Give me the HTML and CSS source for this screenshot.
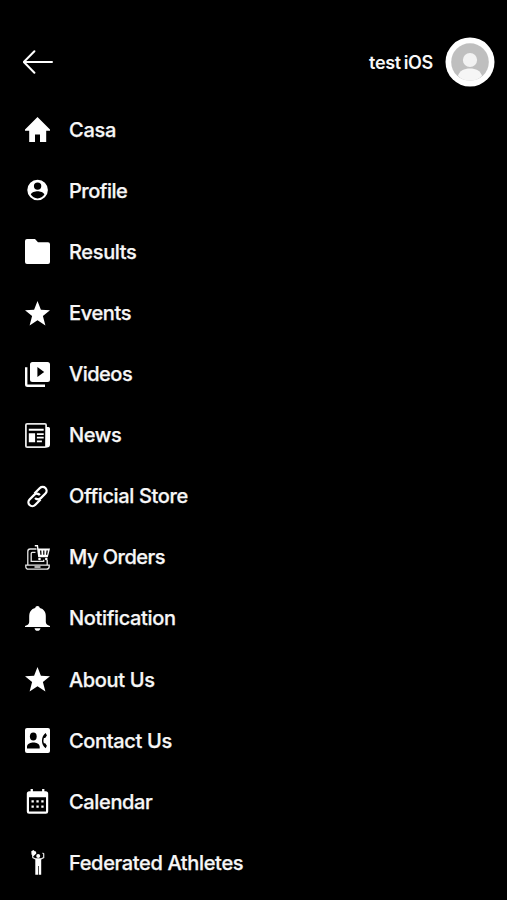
FILE: index.html
```
<!DOCTYPE html>
<html lang="en">
<head>
<meta charset="utf-8">
<title>Menu</title>
<link rel="stylesheet" href="styles.css">
</head>
<body>
<header class="top">
  <svg class="back" viewBox="0 0 30 24"><path d="M11.400 1.200 .8 12l10.600 10.800M1 12h28" /></svg>
  <span class="user">test iOS</span>
  <svg class="avatar" viewBox="0 0 50 50">
    <circle cx="25" cy="25" r="24.500" fill="#fff"/>
    <circle cx="25" cy="25" r="18.800" fill="#bfbfbf"/>
    <circle cx="25" cy="23" r="7.100" fill="#f2f2f2"/>
    <path d="M13 38.800c1.200-5 6.200-7.400 12-7.400s10.800 2.400 12 7.400c-3 3.200-7.200 5-12 5s-9-1.800-12-5z" fill="#f6f6f6"/>
  </svg>
</header>
<nav class="menu">
  <a class="item"><svg class="icon" viewBox="0 0 25 25"><path d="M12.500 0 25 12.500v1.200h-3.800V25H15v-7.500h-5V25H4.200V13.700H0v-1.200z"/></svg><span class="label casa">Casa</span></a>
  <a class="item"><svg class="icon" viewBox="0 0 25 25"><path fill-rule="evenodd" d="M12.600 1.700a10.300 10.300 0 1 0 0 20.600 10.300 10.300 0 0 0 0-20.600zM12.600 4.400a3.700 3.700 0 1 1 0 7.400 3.700 3.700 0 0 1 0-7.400zM12.600 20.400c-3 0-5.300-1.400-6.800-3.800.3-2.300 4.600-3.400 6.800-3.400s6.500 1.100 6.800 3.400c-1.500 2.400-3.800 3.800-6.800 3.800z"/></svg><span class="label tight">Profile</span></a>
  <a class="item"><svg class="icon" viewBox="0 0 25 25"><path d="M2 0h8l3 3.200h10a2 2 0 0 1 2 2V23a2 2 0 0 1-2 2H2a2 2 0 0 1-2-2V2a2 2 0 0 1 2-2z"/></svg><span class="label">Results</span></a>
  <a class="item"><svg class="icon" viewBox="0 0 25 25"><path d="m12.500 0 3.400 8.800 9.100.4-7.100 5.900 2.500 9.400-7.900-5.200-7.900 5.200 2.500-9.400L0 9.200l9.100-.4z"/></svg><span class="label">Events</span></a>
  <a class="item"><svg class="icon" viewBox="0 0 25 25"><path fill-rule="evenodd" d="M7.500 0h15A2.500 2.500 0 0 1 25 2.500v15a2.500 2.500 0 0 1-2.500 2.500h-15A2.500 2.500 0 0 1 5 17.500v-15A2.500 2.500 0 0 1 7.500 0zM12.400 4.900v10.200L19.200 10zM0 5.300h2.400v17.300H20V25H2.500A2.500 2.500 0 0 1 0 22.500z"/></svg><span class="label tight">Videos</span></a>
  <a class="item"><svg class="icon" viewBox="0 0 25 25"><rect x=".9" y=".9" width="20.200" height="23.200" rx="1.200" class="line thick"/><path d="M21 4h2.500A1.500 1.500 0 0 1 25 5.500v16a3 3 0 0 1-3 3h-1.500zM3.800 5.800h14.900v2H3.800zM3.800 10.300h6.300v9H3.800zM11.900 10.200h6.800v1.700h-6.800zM11.900 13.800h6.800v1.700h-6.800zM11.900 17.600h5v1.700h-5z"/></svg><span class="label">News</span></a>
  <a class="item"><svg class="icon" viewBox="0 0 25 25"><g class="line link" transform="rotate(-45 12.500 12.500)"><path d="M12.500 16.800H4.800a3.900 3.900 0 0 1 0-7.800h6.500a3.900 3.900 0 0 1 3.900 4.200"/><path d="M12.500 8.200h7.700a3.900 3.900 0 0 1 0 7.800h-6.500a3.900 3.900 0 0 1-3.900-4.200"/></g></svg><span class="label">Official Store</span></a>
  <a class="item"><svg class="icon" viewBox="0 0 25 25"><path class="line" d="M11.500 4H5.200Q2.800 4 2.800 6.400V19.600M10.500 7.300H7.300Q6.200 7.300 6.200 8.400V16.300H18.700V14.800M22.200 15V19.600M.8 20.200H24.200V21.400Q24.200 24.200 21.400 24.200H3.600Q.8 24.200.8 21.400ZM9.500 22H15.500"/><path fill-rule="evenodd" d="M9.800 0H13L13.500 3.500H25L22.800 12.200H13.200L11.800 1.500H9.800zM15 5.500l.3 4.300h1.300l-.3-4.300zM18.200 5.500v4.300h1.200V5.500zM21.500 5.500l-.5 4.300h1.200l.7-4.300z"/><circle cx="14.500" cy="14" r="1.300"/><circle cx="21.300" cy="14" r="1.300"/></svg><span class="label tight">My Orders</span></a>
  <a class="item"><svg class="icon" viewBox="0 0 25 25"><path d="M12.500 0c1.300 0 2.100.8 2.300 2 4 1 6 4 6 8.200v5.700c0 2.100 1.500 3 4.200 4V21H0v-1.100c2.700-1 4.200-1.900 4.200-4v-5.700C4.200 6 6.200 3 10.200 2c.2-1.200 1-2 2.300-2zM9.500 22.200h6c-.3 1.700-1.500 2.600-3 2.600s-2.700-.9-3-2.600z"/></svg><span class="label">Notification</span></a>
  <a class="item"><svg class="icon" viewBox="0 0 25 25"><path d="m12.500 0 3.400 8.800 9.100.4-7.100 5.900 2.500 9.400-7.900-5.200-7.900 5.200 2.500-9.400L0 9.200l9.100-.4z"/></svg><span class="label">About Us</span></a>
  <a class="item"><svg class="icon" viewBox="0 0 25 25"><rect width="25" height="25" rx="2"/><g class="cut"><ellipse cx="8.300" cy="8.500" rx="3.400" ry="4"/><path d="M2 20.600v-2c0-2.900 3.900-4.200 6.400-4.200s6.300 1.300 6.300 4.200v2zM20.700 5c-5 3.200-5 12.200 0 15.200l1.200-2.500-1.700-2.400h-1.300q-1-2.700 0-5.400h1.300l1.700-2.400z"/></g></svg><span class="label">Contact Us</span></a>
  <a class="item"><svg class="icon" viewBox="0 0 25 25"><path fill-rule="evenodd" d="M5.600 0h2.300v2.300h9.200V0h2.300v2.300h1.300a2.500 2.500 0 0 1 2.500 2.500v17.700a2.300 2.300 0 0 1-2.300 2.300H4.100a2.300 2.300 0 0 1-2.300-2.300V4.800a2.500 2.500 0 0 1 2.500-2.500h1.300zM4 8.200v14.400h17V8.200z"/><path d="M6.500 11.200h2.300v2.300H6.500zM11.400 11.200h2.300v2.300h-2.300zM16.300 11.200h2.300v2.300h-2.300zM6.500 16.500h2.300v2.300H6.500zM11.400 16.500h2.300v2.300h-2.300zM16.300 16.500h2.300v2.300h-2.300z"/></svg><span class="label">Calendar</span></a>
  <a class="item"><svg class="icon" viewBox="0 0 25 25"><circle cx="13.200" cy="6" r="2"/><path d="M6.300 1.200 8.500 0l1.200 1.300 1.300.3.300 2L8.400 6.200 6.500 4.500z"/><path d="M10.300 8.300h5.900v16.500h-2.500V16h-.7v8.800h-2.700z"/><path class="line arms" d="M7.500 4.500 7.800 7.500 11 9.200M15.500 9.200 18.700 7.600V3.800L17.500 3"/></svg><span class="label">Federated Athletes</span></a>
</nav>
</body>
</html>
```
FILE: styles.css
```
* { box-sizing: border-box; }

body {
  margin: 0;
  height: 900px;
  overflow: hidden;
  background: #000;
  color: #f7f7f7;
  font-family: Inter, "Liberation Sans", sans-serif;
  font-size: 20px;
  font-weight: 500;
}

.top {
  display: flex;
  align-items: center;
  height: 99px;
  padding: 25px 12px 0 23px;
}

.back {
  width: 30px;
  height: 24px;
  fill: none;
  stroke: #fff;
  stroke-width: 2;
  stroke-linecap: round;
  stroke-linejoin: round;
}

.user {
  margin-left: auto;
  margin-right: 12px;
  font-size: 18px;
  font-weight: 600;
  letter-spacing: -0.3px;
  word-spacing: -1.5px;
}

.avatar {
  width: 50px;
  height: 50px;
}

.menu {
  display: grid;
  grid-auto-rows: 61.1px;
  padding-top: 0.2px;
}

.item {
  display: flex;
  align-items: center;
  gap: 19px;
  padding-left: 25px;
}

.icon {
  flex: none;
  width: 25px;
  height: 25px;
  fill: #fff;
  overflow: visible;
}

.label {
  line-height: 24px;
  white-space: nowrap;
  letter-spacing: -0.35px;
  -webkit-text-stroke: 0.25px #f7f7f7;
}

.label.casa { letter-spacing: -0.25px; }
.label.tight { letter-spacing: -0.5px; }

.line {
  fill: none;
  stroke: #e8e8e8;
  stroke-width: 1.3;
}

.thick { stroke-width: 1.8; }
.link { stroke-width: 2.3; stroke: #fff; }
.arms { stroke-width: 1.2; }
.cut { fill: #000; }
```
